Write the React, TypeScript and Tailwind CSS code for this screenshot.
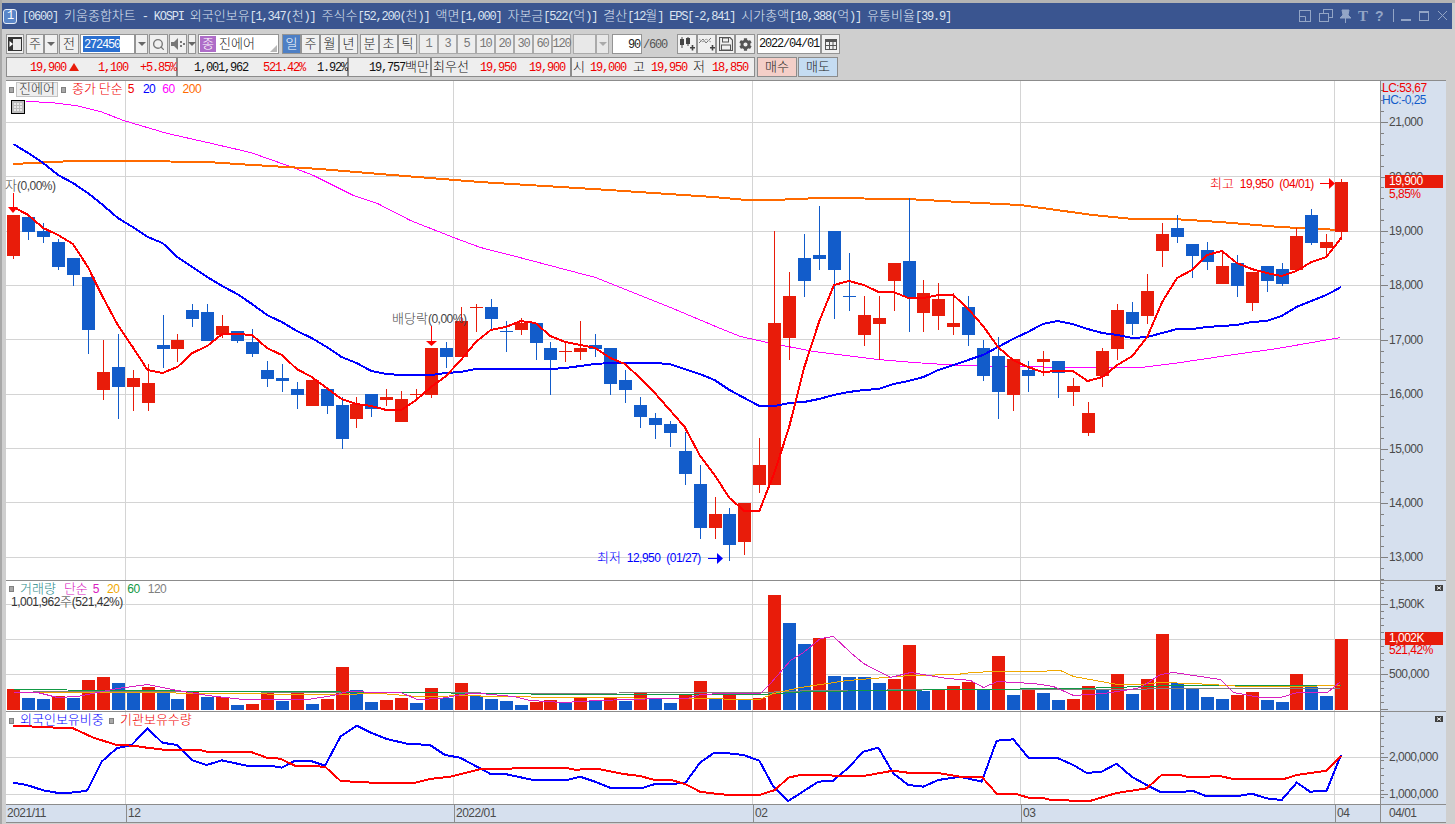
import type { ReactNode } from 'react';
import { Search } from 'lucide-react';
import { FaCog } from 'react-icons/fa';

const RED = '#e81c0a';
const BLUE = '#125cca';

// toolbar text: the original font is half width latin + full width hangul
function T({ text }: { text: string }) {
  return (
    <>
      {text.split(/([가-힣]+)/).map((part, i) =>
        /[가-힣]/.test(part) ? (
          <span key={i} className="text-[13px] tracking-normal font-light">{part}</span>
        ) : (
          <span key={i} className="text-[12px] tracking-[-1.2px]">{part}</span>
        ),
      )}
    </>
  );
}

// chart text: same hangul, but latin is proportional with 6px digits
function C({ text }: { text: string }) {
  return (
    <>
      {text.split(/([가-힣]+)/).map((part, i) =>
        /[가-힣]/.test(part) ? (
          <span key={i} className="text-[13px] tracking-normal font-light">{part}</span>
        ) : (
          <span key={i} className="text-[12px] tracking-[-0.5px] font-['Liberation_Sans',sans-serif]">{part}</span>
        ),
      )}
    </>
  );
}

function Btn({ className = '', children }: { className?: string; children?: ReactNode }) {
  return (
    <div className={`h-[20px] shrink-0 flex items-center justify-center border border-[#949494] bg-[#f0f0f0] text-[#222] ${className}`}>
      {children}
    </div>
  );
}

function Arrow({ className = '' }: { className?: string }) {
  return (
    <Btn className={className}>
      <div className="w-0 h-0 border-x-[4px] border-x-transparent border-t-[4px] border-t-[#666]" />
    </Btn>
  );
}

// candles: wick top, body top, body bottom, wick bottom, colour
type Candle = [number, number, number, number, 'r' | 'b'];
const candles: Candle[] = [
  [215, 215, 256, 259, 'r'], [217, 217, 232, 240, 'b'], [223, 231, 237, 243, 'b'], [239, 242, 267, 270, 'b'],
  [258, 258, 275, 286, 'b'], [277, 277, 330, 354, 'b'], [340, 372, 390, 400, 'r'], [334, 367, 387, 419, 'b'],
  [370, 378, 387, 411, 'r'], [364, 383, 403, 411, 'r'], [315, 345, 349, 368, 'b'], [334, 340, 349, 362, 'r'],
  [304, 310, 319, 327, 'b'], [304, 312, 341, 341, 'b'], [315, 326, 335, 338, 'r'], [331, 331, 341, 343, 'b'],
  [329, 342, 354, 357, 'b'], [361, 370, 379, 387, 'b'], [364, 378, 381, 392, 'b'], [382, 389, 395, 409, 'b'],
  [380, 380, 406, 406, 'r'], [389, 389, 406, 414, 'b'], [397, 405, 439, 449, 'b'], [397, 404, 419, 428, 'r'],
  [394, 394, 409, 417, 'b'], [389, 397, 400, 406, 'r'], [391, 399, 422, 422, 'r'], [389, 394, 395, 401, 'r'],
  [348, 348, 395, 398, 'r'], [342, 348, 357, 368, 'b'], [307, 321, 357, 357, 'r'], [304, 307, 308, 332, 'r'],
  [299, 307, 319, 330, 'b'], [321, 331, 332, 352, 'b'], [318, 323, 330, 335, 'r'], [323, 323, 343, 360, 'b'],
  [342, 348, 360, 395, 'b'], [342, 351, 352, 362, 'r'], [321, 348, 352, 360, 'r'], [334, 345, 349, 357, 'b'],
  [348, 348, 384, 395, 'b'], [370, 380, 390, 403, 'b'], [397, 405, 417, 428, 'b'], [413, 418, 425, 439, 'b'],
  [421, 424, 433, 447, 'b'], [432, 451, 474, 485, 'b'], [465, 484, 528, 539, 'b'], [497, 514, 528, 539, 'r'],
  [508, 514, 545, 561, 'b'], [503, 503, 542, 555, 'r'], [438, 465, 485, 493, 'r'], [231, 323, 485, 485, 'r'],
  [272, 296, 338, 360, 'r'], [234, 258, 281, 297, 'b'], [206, 255, 259, 270, 'b'], [231, 231, 270, 319, 'b'],
  [253, 296, 297, 311, 'b'], [296, 315, 335, 346, 'r'], [296, 318, 324, 360, 'r'], [263, 263, 281, 311, 'r'],
  [198, 261, 297, 332, 'b'], [280, 293, 313, 332, 'r'], [283, 299, 316, 330, 'r'], [293, 323, 327, 335, 'r'],
  [296, 307, 335, 346, 'b'], [340, 348, 376, 381, 'b'], [337, 356, 392, 419, 'b'], [359, 359, 395, 411, 'r'],
  [361, 370, 376, 392, 'b'], [351, 359, 362, 376, 'r'], [361, 361, 373, 398, 'b'], [378, 386, 392, 406, 'r'],
  [402, 413, 433, 436, 'r'], [348, 351, 376, 387, 'r'], [304, 310, 349, 360, 'r'], [302, 312, 324, 335, 'b'],
  [274, 291, 316, 324, 'r'], [223, 234, 251, 267, 'r'], [215, 228, 237, 243, 'b'], [244, 244, 256, 278, 'b'],
  [242, 250, 262, 270, 'b'], [253, 266, 284, 284, 'r'], [255, 263, 286, 297, 'b'], [272, 272, 303, 311, 'r'],
  [266, 266, 281, 292, 'b'], [263, 269, 284, 286, 'b'], [228, 236, 270, 270, 'r'], [209, 215, 243, 245, 'b'],
  [234, 242, 248, 255, 'r'], [179, 182, 232, 240, 'r'],
];

const cx = (i: number) => 13.3 + 14.92 * i;

const ma5 = [
  207, 215, 228, 235, 244, 267, 297, 325, 347, 370, 373, 367, 353, 346, 334, 334, 335, 348, 355, 369, 377, 388, 399, 404, 406,
  410, 410, 400, 387, 376, 360, 342, 330, 327, 321, 323, 336, 342, 345, 348, 358, 364, 378, 393, 410, 427, 455, 475, 498, 511,
  511, 473, 427, 368, 322, 285, 281, 285, 292, 292, 298, 298, 295, 295, 309, 326, 347, 360, 367, 372, 371, 371, 381, 377, 365,
  356, 337, 302, 278, 270, 255, 251, 263, 269, 273, 276, 271, 262, 257, 238,
];
const ma20 = [
  144, 153, 163, 175, 183, 193, 205, 218, 227, 237, 243, 257, 267, 277, 286, 294, 304, 315, 322, 331, 338, 347, 357, 363, 371,
  374, 375, 375, 375, 373, 372, 369, 369, 369, 369, 369, 369, 368, 366, 364, 363, 363, 363, 363, 364, 369, 374, 380, 390, 398,
  406, 406, 403, 402, 399, 395, 392, 390, 389, 384, 381, 377, 370, 365, 360, 355, 347, 339, 332, 324, 321, 324, 329, 333, 335,
  338, 337, 333, 329, 329, 327, 326, 325, 322, 321, 316, 307, 301, 295, 287,
];
const ma60: number[] = [
  26, 101, 50, 102, 75, 105, 100, 111, 123, 120, 167, 133, 207, 142, 250, 152, 287, 165, 313, 175, 353, 195, 377, 203, 410, 220,
  453, 237, 480, 247, 523, 258, 557, 267, 595, 277, 620, 287, 670, 307, 720, 328, 740, 336, 767, 342, 813, 351, 877, 359, 913, 362,
  960, 365, 1070, 367, 1140, 367, 1173, 363, 1227, 355, 1277, 348, 1340, 337,
];
const ma200: number[] = [
  13, 164, 73, 161, 133, 161, 207, 162, 253, 165, 320, 169, 380, 174, 480, 182, 609, 190, 713, 197, 747, 200, 773, 200, 820, 198,
  907, 199, 960, 202, 1020, 205, 1093, 215, 1133, 219, 1173, 219, 1220, 222, 1280, 227, 1340, 230,
];

// volume bars: top of each bar (baseline 710)
const vol: [number, 'r' | 'b'][] = [
  [689, 'r'], [698, 'b'], [699, 'b'], [696, 'r'], [698, 'b'], [680, 'r'], [677, 'r'], [683, 'b'], [692, 'b'], [687, 'r'],
  [692, 'b'], [699, 'b'], [692, 'r'], [697, 'b'], [697, 'r'], [705, 'b'], [704, 'r'], [692, 'r'], [701, 'b'], [691, 'r'],
  [704, 'b'], [699, 'r'], [667, 'r'], [690, 'b'], [702, 'b'], [700, 'r'], [698, 'r'], [703, 'b'], [688, 'r'], [698, 'b'],
  [683, 'r'], [696, 'b'], [699, 'b'], [701, 'b'], [705, 'b'], [702, 'r'], [700, 'r'], [703, 'b'], [697, 'r'], [701, 'b'],
  [697, 'r'], [701, 'b'], [692, 'r'], [698, 'b'], [703, 'b'], [695, 'r'], [681, 'r'], [698, 'b'], [695, 'r'], [699, 'b'],
  [698, 'r'], [595, 'r'], [623, 'b'], [644, 'b'], [638, 'r'], [676, 'b'], [677, 'b'], [677, 'b'], [683, 'b'], [679, 'r'],
  [645, 'r'], [691, 'b'], [690, 'r'], [686, 'r'], [682, 'r'], [689, 'b'], [656, 'r'], [695, 'b'], [689, 'r'], [693, 'b'],
  [700, 'b'], [699, 'r'], [686, 'r'], [690, 'b'], [674, 'r'], [694, 'b'], [679, 'r'], [634, 'r'], [683, 'b'], [689, 'b'],
  [697, 'b'], [699, 'b'], [695, 'r'], [692, 'r'], [700, 'b'], [702, 'b'], [674, 'r'], [687, 'b'], [696, 'b'], [639, 'r'],
];

// lines read off the reference, x and y in 3x crop units with a crop origin
const crop = (ox: number, oy: number, pts: number[]) => {
  const out: number[] = [];
  for (let i = 0; i < pts.length; i += 2) out.push(ox + pts[i] / 3, oy + pts[i + 1] / 3);
  return out;
};
const low = (a: number[], b: number[], c: number[]) => [...crop(0, 575, a), ...crop(480, 575, b), ...crop(960, 575, c)];

const volMa5 = low(
  [40, 350, 110, 350, 170, 365, 230, 362, 290, 350, 350, 338, 440, 328, 530, 345, 620, 360, 730, 372, 820, 373, 920, 372, 1000, 360, 1040, 347, 1140, 350, 1200, 350, 1250, 373, 1320, 368, 1400, 353],
  [0, 353, 100, 362, 150, 375, 250, 382, 350, 375, 450, 372, 540, 368, 620, 368, 660, 358, 730, 355, 840, 355, 870, 325, 930, 255, 970, 230, 1020, 190, 1060, 182, 1110, 230, 1150, 263, 1230, 305, 1290, 292, 1400, 310],
  [0, 312, 30, 315, 70, 337, 110, 317, 160, 322, 220, 325, 280, 332, 340, 360, 430, 353, 510, 343, 540, 335, 600, 297, 640, 292, 700, 300, 780, 312, 820, 350, 900, 365, 960, 367, 1010, 352, 1100, 352, 1140, 317],
);
const volMa20 = low(
  [40, 350, 300, 352, 500, 350, 550, 355, 750, 355, 850, 357, 1000, 358, 1140, 353, 1250, 362, 1440, 360],
  [0, 362, 300, 365, 620, 370, 838, 372, 880, 355, 960, 335, 1100, 316, 1290, 300, 1440, 296],
  [0, 293, 90, 288, 220, 288, 300, 286, 340, 303, 470, 327, 540, 327, 600, 322, 700, 323, 850, 332, 1000, 332, 1140, 330],
);
const volMa60 = low(
  [40, 341, 100, 343, 300, 345, 1260, 351, 1440, 354],
  [0, 355, 300, 357, 840, 356, 990, 348, 1440, 341],
  [0, 341, 360, 340, 640, 330, 1140, 330],
);
const volMa120 = low([100, 348, 1440, 352], [0, 353, 840, 352, 1000, 346, 1440, 342], [0, 342, 1140, 340]);

const foreign = low(
  [40, 623, 80, 630, 130, 646, 175, 654, 230, 652, 262, 646, 305, 560, 350, 520, 395, 510, 442, 460, 487, 503, 530, 510, 577, 556, 620, 570, 665, 556, 740, 572, 810, 572, 845, 578, 885, 557, 930, 557, 975, 572, 1022, 484, 1070, 452, 1110, 472, 1160, 492, 1220, 506, 1290, 510, 1335, 540, 1380, 548, 1440, 580],
  [30, 596, 80, 598, 155, 614, 265, 614, 300, 605, 345, 620, 390, 638, 490, 638, 525, 627, 615, 625, 660, 563, 700, 535, 745, 535, 790, 540, 838, 557, 880, 635, 925, 678, 1015, 620, 1060, 617, 1105, 578, 1150, 530, 1195, 518, 1240, 595, 1285, 630, 1330, 635, 1375, 615, 1440, 605],
  [65, 620, 110, 497, 160, 493, 205, 548, 290, 548, 340, 570, 380, 594, 425, 590, 470, 566, 515, 605, 560, 630, 600, 650, 670, 650, 700, 648, 735, 662, 840, 662, 875, 656, 920, 670, 965, 675, 1010, 623, 1050, 650, 1100, 647, 1143, 540],
);
const institution = low(
  [40, 452, 170, 458, 215, 458, 280, 488, 350, 510, 400, 512, 440, 518, 490, 524, 600, 525, 620, 530, 750, 530, 800, 548, 840, 551, 885, 572, 975, 575, 1022, 618, 1115, 623, 1245, 623, 1290, 612, 1350, 605, 1440, 583],
  [80, 582, 125, 578, 255, 578, 285, 584, 355, 582, 430, 597, 480, 603, 520, 614, 570, 614, 615, 627, 660, 650, 705, 656, 750, 660, 838, 660, 885, 645, 925, 608, 960, 600, 1150, 603, 1240, 587, 1290, 594, 1375, 594, 1440, 605],
  [65, 605, 110, 656, 165, 656, 205, 668, 245, 668, 270, 674, 360, 678, 390, 678, 470, 654, 560, 640, 605, 600, 660, 600, 680, 605, 740, 605, 780, 603, 815, 611, 975, 611, 1010, 600, 1100, 587, 1143, 543],
);

const vGrid = [125.5, 453.5, 752.5, 1020.5, 1334.5];
const priceY = (p: number) => 231 + (19000 - p) * 0.05438;
const prices = [21000, 20000, 19000, 18000, 17000, 16000, 15000, 14000, 13000];

function Line({ pts, color, w = 2 }: { pts: number[]; color: string; w?: number }) {
  // 1px lines sit on pixel centres, else the rasteriser can drop flat runs
  const points = pts.map((v) => (w === 1 ? Math.round(v) + 0.5 : v)).join(' ');
  return <polyline points={points} fill="none" stroke={color} strokeWidth={w} shapeRendering="crispEdges" />;
}

function Grid({ top, h, ys }: { top: number; h: number; ys: number[] }) {
  return (
    <g stroke="#d4d4d4" strokeWidth={1} shapeRendering="crispEdges">
      {ys.map((y) => <line key={y} x1={6} x2={1380} y1={y + 0.5} y2={y + 0.5} />)}
      {vGrid.map((x) => <line key={x} x1={x} x2={x} y1={top} y2={top + h} />)}
    </g>
  );
}

function Ticks({ top, h, major, minor }: { top: number; h: number; major: number[]; minor: number[] }) {
  return (
    <svg className="absolute inset-0" width={65} height={h} viewBox={`0 ${top} 65 ${h}`}>
      <g stroke="#808080" strokeWidth={1} shapeRendering="crispEdges">
        {minor.map((y) => <line key={y} x1={0} x2={3} y1={Math.round(y) + 0.5} y2={Math.round(y) + 0.5} />)}
        {major.map((y) => <line key={y} x1={0} x2={7} y1={Math.round(y) + 0.5} y2={Math.round(y) + 0.5} />)}
      </g>
    </svg>
  );
}

function Dot({ className = '' }: { className?: string }) {
  return <div className={`w-[5px] h-[6px] bg-[#a8a8a8] border border-[#808080] ${className}`} />;
}

function MiniClose({ className = '' }: { className?: string }) {
  return (
    <svg className={`absolute ${className}`} width={8} height={6} viewBox="0 0 8 6">
      <rect width={8} height={6} fill="#404040" />
      <path d="M2 1.5 L6 4.5 M6 1.5 L2 4.5" stroke="#fff" strokeWidth={1} />
    </svg>
  );
}

function AxisLabel({ y, text }: { y: number; text: string }) {
  return (
    <div className="absolute left-[8px] leading-4 text-[#4a4a4a] whitespace-nowrap" style={{ top: y - 8 }}>
      <C text={text} />
    </div>
  );
}

function PricePane() {
  return (
    <div className="flex h-[500px] border-t border-[#8c8c8c]">
      <div className="relative w-[1374px] h-[499px] bg-white">
        <svg className="block" width={1374} height={499} viewBox="6 81 1374 499">
          <Grid top={81} h={499} ys={[122, 176, 231, 285, 339, 394, 448, 502, 557]} />
          <Line pts={ma60} color="#ff00ff" w={1} />
          <Line pts={ma200} color="#ff6a00" />
          {candles.map(([wt, bt, bb, wb, c], i) => {
            const fill = c === 'r' ? RED : BLUE;
            const x = Math.round(cx(i));
            return (
              <g key={i} fill={fill} shapeRendering="crispEdges">
                <rect x={x} y={wt} width={1} height={wb - wt} />
                <rect x={x - 6} y={bt} width={13} height={bb - bt} />
              </g>
            );
          })}
          <Line pts={ma20.flatMap((y, i) => [cx(i), y])} color="#0000ff" />
          <Line pts={ma5.flatMap((y, i) => [cx(i), y])} color="#ff0000" />
          <g fill="#ff0000" stroke="none">
            <rect x={13} y={193} width={1} height={14} />
            <polygon points="8,207 18,207 13,213" />
            <rect x={431} y={326} width={1} height={15} />
            <polygon points="426,341 437,341 431.5,346" />
            <rect x={1320} y={183} width={10} height={1} />
            <polygon points="1329,178 1329,189 1335,183.5" />
          </g>
          <g fill="#0000ff">
            <rect x={708} y={558} width={10} height={1} />
            <polygon points="717,553 717,564 723,558.5" />
          </g>
        </svg>

        {/* legend */}
        <Dot className="absolute left-[3px] top-[6px]" />
        <div className="absolute left-[10px] top-[1px] w-[42px] h-[15px] flex items-center justify-center bg-[#eeeeee] border border-[#c4c4c4] text-[#333]">
          <C text="진에어" />
        </div>
        <Dot className="absolute left-[55px] top-[6px]" />
        <div className="absolute left-[66px] top-[0px] leading-4 flex whitespace-nowrap">
          <span className="text-[#f00000]"><C text="종가 단순" /></span>
          <span className="ml-[5px] text-[#f00000]"><C text="5" /></span>
          <span className="ml-[9px] text-[#0000ff]"><C text="20" /></span>
          <span className="ml-[7px] text-[#ff00ff]"><C text="60" /></span>
          <span className="ml-[8px] text-[#ff6a00]"><C text="200" /></span>
        </div>
        <div className="absolute left-[5px] top-[19px] w-[14px] h-[14px] border border-black bg-[#bdbdbd] grid grid-cols-3 gap-px p-[2px]">
          {Array.from({ length: 9 }, (_, i) => <div key={i} className="bg-[#e8e8e8]" />)}
        </div>

        {/* chart notes */}
        <div className="absolute left-[-1px] top-[97px] leading-4 text-[#444] whitespace-nowrap"><C text="자(0,00%)" /></div>
        <div className="absolute left-[386px] top-[230px] leading-4 text-[#444] whitespace-nowrap"><C text="배당락(0,00%)" /></div>
        <div className="absolute left-[1204px] top-[95px] leading-4 text-[#f00000] whitespace-nowrap [word-spacing:3px]"><C text="최고 19,950 (04/01)" /></div>
        <div className="absolute left-[591px] top-[469px] leading-4 text-[#0000ff] whitespace-nowrap [word-spacing:3px]"><C text="최저 12,950 (01/27)" /></div>
      </div>

      <div className="relative w-[66px] bg-[#d6e0ee] border-l border-[#8c8c8c]">
        <Ticks
          top={81}
          h={499}
          major={prices.map(priceY)}
          minor={Array.from({ length: 50 }, (_, i) => priceY(12400 + i * 200))}
        />
        <div className="absolute left-[1px] top-[1px] leading-[13px] text-[#f00000] whitespace-nowrap"><C text="LC:53,67" /></div>
        <div className="absolute left-[1px] top-[13px] leading-[13px] text-[#125cca] whitespace-nowrap"><C text="HC:-0,25" /></div>
        {prices.map((p) => (
          <AxisLabel key={p} y={priceY(p) - 81} text={p.toLocaleString('en-US')} />
        ))}
        <div className="absolute left-[4px] top-[94px] w-[58px] h-[13px] bg-[#e81c0a] text-white leading-[13px] pl-[4px]"><C text="19,900" /></div>
        <div className="absolute left-[8px] top-[105px] leading-4 text-[#f00000]"><C text="5,85%" /></div>
      </div>
    </div>
  );
}

function VolumePane() {
  return (
    <div className="flex h-[131px] border-t border-[#8c8c8c]">
      <div className="relative w-[1374px] h-[130px] bg-white">
        <svg className="block" width={1374} height={130} viewBox="6 581 1374 130">
          <Grid top={581} h={130} ys={[604, 639, 674]} />
          {vol.map(([top, c], i) => (
            <rect key={i} x={Math.round(cx(i)) - 6} y={top} width={13} height={710 - top} fill={c === 'r' ? RED : BLUE} shapeRendering="crispEdges" />
          ))}
          <Line pts={volMa120} color="#808080" w={1} />
          <Line pts={volMa60} color="#119944" w={1} />
          <Line pts={volMa20} color="#f0a800" w={1} />
          <Line pts={volMa5} color="#d820c0" w={1} />
        </svg>
        <Dot className="absolute left-[3px] top-[5px]" />
        <div className="absolute left-[14px] top-[0px] leading-4 flex whitespace-nowrap">
          <span className="text-[#2a8a8a]"><C text="거래량" /></span>
          <span className="ml-[8px] text-[#d820c0]"><C text="단순" /></span>
          <span className="ml-[5px] text-[#d820c0]"><C text="5" /></span>
          <span className="ml-[8px] text-[#f0a800]"><C text="20" /></span>
          <span className="ml-[8px] text-[#119944]"><C text="60" /></span>
          <span className="ml-[8px] text-[#808080]"><C text="120" /></span>
        </div>
        <div className="absolute left-[5px] top-[13px] leading-4 text-[#333] whitespace-nowrap"><C text="1,001,962주(521,42%)" /></div>
      </div>
      <div className="relative w-[66px] bg-[#d6e0ee] border-l border-[#8c8c8c]">
        <Ticks top={581} h={130} major={[604, 639, 674, 709]} minor={Array.from({ length: 19 }, (_, i) => 583 + i * 7)} />
        <MiniClose className="left-[54px] top-[4px]" />
        <AxisLabel y={23} text="1,500K" />
        <AxisLabel y={93} text="500,000" />
        <div className="absolute left-[4px] top-[51px] w-[58px] h-[13px] bg-[#e81c0a] text-white leading-[13px] pl-[4px]"><C text="1,002K" /></div>
        <div className="absolute left-[8px] top-[61px] leading-4 text-[#f00000]"><C text="521,42%" /></div>
      </div>
    </div>
  );
}

function HoldingPane() {
  return (
    <div className="flex h-[93px] border-t border-[#8c8c8c]">
      <div className="relative w-[1374px] h-[92px] bg-white">
        <svg className="block" width={1374} height={92} viewBox="6 712 1374 92">
          <Grid top={712} h={92} ys={[757, 794]} />
          <Line pts={foreign} color="#0000ff" />
          <Line pts={institution} color="#ff0000" />
        </svg>
        <Dot className="absolute left-[3px] top-[6px]" />
        <div className="absolute left-[14px] top-[0px] leading-4 text-[#0000ff] whitespace-nowrap"><C text="외국인보유비중" /></div>
        <Dot className="absolute left-[103px] top-[6px]" />
        <div className="absolute left-[114px] top-[0px] leading-4 text-[#f00000] whitespace-nowrap"><C text="기관보유수량" /></div>
      </div>
      <div className="relative w-[66px] bg-[#d6e0ee] border-l border-[#8c8c8c]">
        <Ticks top={712} h={92} major={[757, 794]} minor={Array.from({ length: 12 }, (_, i) => 716 + i * 7.4)} />
        <MiniClose className="left-[54px] top-[4px]" />
        <AxisLabel y={45} text="2,000,000" />
        <AxisLabel y={82} text="1,000,000" />
      </div>
    </div>
  );
}

function DateAxis() {
  const cells = [
    { w: 'w-[120px]', t: '2021/11' },
    { w: 'w-[328px]', t: '12' },
    { w: 'w-[299px]', t: '2022/01' },
    { w: 'w-[268px]', t: '02' },
    { w: 'w-[314px]', t: '03' },
    { w: 'w-[45px]', t: '04' },
    { w: 'w-[66px]', t: '04/01' },
  ];
  return (
    <div className="flex h-[19px] bg-[#d6e0ee] border-y border-[#8c8c8c] text-[#4a4a4a]">
      {cells.map(({ w, t }, i) => (
        <div key={t} className={`${w} leading-[17px] ${i === 6 ? 'pl-[8px]' : 'pl-[1px]'} ${i > 0 ? 'border-l border-[#8c8c8c]' : ''}`}>
          <C text={t} />
        </div>
      ))}
    </div>
  );
}

function TitleBar() {
  return (
    <div className="h-[26px] flex items-center bg-[#3a5590] text-[#dce4f0] relative">
      <div className="ml-[1px] w-[14px] h-[15px] rounded-[3px] border border-[#e8eef8] bg-[#5a86c8] flex items-center justify-center text-white leading-none">
        <T text="1" />
      </div>
      <div className="ml-[5px] whitespace-nowrap leading-none">
        <T text="[0600] 키움종합차트 - KOSPI 외국인보유[1,347(천)] 주식수[52,200(천)] 액면[1,000] 자본금[522(억)] 결산[12월] EPS[-2,841] 시가총액[10,388(억)] 유통비율[39.9]" />
      </div>
      <div className="absolute left-[1297px] top-[6px] flex items-center text-[#93a5c6]">
        <svg width={150} height={18} viewBox="0 0 150 18" fill="none" stroke="currentColor">
          <rect x={0.5} y={1.5} width={11} height={11} />
          <path d="M1 7.5 H6.5 V12" />
          <rect x={24.5} y={0.5} width={9} height={8} />
          <rect x={20.5} y={4.5} width={9} height={8} fill="#3a5590" />
          <path d="M43 1 H50 L49 6 L52 9 H41 L44 6 Z M46.5 9 V14" fill="currentColor" strokeWidth={1} />
          <line x1={94.5} y1={0} x2={94.5} y2={13} />
          <rect x={102} y={10} width={10} height={2} fill="currentColor" stroke="none" />
          <rect x={120.5} y={2.5} width={9} height={9} />
          <rect x={120} y={2} width={10} height={2} fill="currentColor" stroke="none" />
          <path d="M139 2 L148 11 M148 2 L139 11" />
        </svg>
        <span className="absolute left-[59px] -top-[1px] font-['Liberation_Serif',serif] font-bold text-[15px] leading-4">T</span>
        <span className="absolute left-[76px] -top-[1px] font-['Liberation_Sans',sans-serif] font-bold text-[14px] leading-4">?</span>
      </div>
    </div>
  );
}

function Toolbar() {
  return (
    <div className="h-[20px] flex items-center">
      <Btn className="w-[18px]">
        <svg width={14} height={14} viewBox="0 0 14 14">
          <rect x={0.5} y={0.5} width={13} height={13} fill="#e8e8e8" stroke="#333" />
          <rect x={0} y={0} width={5} height={14} fill="#333" />
          <path d="M5 7 L1.5 4 V10 Z" fill="#fff" />
          <rect x={0} y={0} width={14} height={2} fill="#333" />
        </svg>
      </Btn>
      <Btn className="ml-[2px] w-[18px]"><T text="주" /></Btn>
      <Arrow className="w-[14px]" />
      <Btn className="ml-[1px] w-[20px]"><T text="전" /></Btn>
      <div className="ml-[1px] w-[55px] h-[20px] bg-white border border-[#949494] flex items-center pl-[2px]">
        <span className="bg-[#2a6fd0] text-white leading-4 w-[37px] h-[16px] pl-[1px]"><T text="272450" /></span>
      </div>
      <Arrow className="w-[13px]" />
      <Btn className="ml-[1px] w-[19px]"><Search size={13} strokeWidth={2.5} color="#777" /></Btn>
      <Btn className="ml-[1px] w-[18px]">
        <svg width={14} height={12} viewBox="0 0 14 12" fill="#777">
          <path d="M0 4 H3 L7 0 V12 L3 8 H0 Z" />
          <rect x={9} y={3} width={2} height={2} />
          <rect x={9} y={7} width={2} height={2} />
          <rect x={12} y={5} width={2} height={2} />
        </svg>
      </Btn>
      <Arrow className="ml-[1px] w-[8px]" />
      <div className="ml-[2px] w-[81px] h-[20px] bg-white border border-[#949494] flex items-center pl-[1px] relative">
        <div className="w-[16px] h-[16px] bg-[#ae6cc8] text-white flex items-center justify-center"><T text="종" /></div>
        <span className="ml-[3px] text-[#222]"><T text="진에어" /></span>
        <div className="absolute right-[1px] bottom-[1px] w-0 h-0 border-l-[7px] border-l-transparent border-b-[7px] border-b-[#b8b8b8]" />
      </div>
      <Btn className="ml-[3px] w-[19px] !bg-[#4d7fc5] !text-white"><T text="일" /></Btn>
      <Btn className="w-[19px]"><T text="주" /></Btn>
      <Btn className="w-[19px]"><T text="월" /></Btn>
      <Btn className="w-[19px]"><T text="년" /></Btn>
      <Btn className="ml-[2px] w-[19px]"><T text="분" /></Btn>
      <Btn className="w-[19px]"><T text="초" /></Btn>
      <Btn className="w-[19px]"><T text="틱" /></Btn>
      <div className="ml-[2px] flex text-[#777]">
        {['1', '3', '5', '10', '20', '30', '60', '120'].map((n) => (
          <div key={n} className="w-[19px] h-[20px] shrink-0 flex items-center justify-center border border-[#aaaaaa] bg-[#eeeeee]">
            <T text={n} />
          </div>
        ))}
      </div>
      <div className="ml-[2px] w-[23px] h-[20px] bg-[#e8e8e8] border border-[#aaaaaa]" />
      <div className="w-[13px] h-[20px] bg-[#e8e8e8] border border-[#aaaaaa] flex items-center justify-center">
        <div className="w-0 h-0 border-x-[4px] border-x-transparent border-t-[4px] border-t-[#aaa]" />
      </div>
      <div className="ml-[3px] w-[30px] h-[20px] bg-white border border-[#949494] text-right pr-[1px] leading-[18px] text-[#222]"><T text="90" /></div>
      <div className="ml-[1px] w-[34px] text-[#555]"><T text="/600" /></div>
      <Btn className="w-[20px]">
        <svg width={16} height={14} viewBox="0 0 16 14" fill="#444">
          <rect x={1} y={2} width={4} height={6} /><rect x={2.5} y={0} width={1} height={11} />
          <rect x={7} y={1} width={4} height={6} /><rect x={8.5} y={0} width={1} height={9} />
          <path d="M11 10 H16 V11.5 H11 Z M12.7 8 H14.3 V13.5 H12.7 Z" />
        </svg>
      </Btn>
      <Btn className="w-[19px]">
        <svg width={16} height={14} viewBox="0 0 16 14" fill="none" stroke="#777">
          <path d="M0 6 L4 2 L7 6 L12 1" /><path d="M0 2 L4 5 L7 2 L12 5" stroke="#aaa" />
          <path d="M11 10 H16 V11.5 H11 Z M12.7 8 H14.3 V13.5 H12.7 Z" fill="#444" stroke="none" />
        </svg>
      </Btn>
      <Btn className="w-[19px]">
        <svg width={14} height={14} viewBox="0 0 14 14" fill="none" stroke="#555">
          <path d="M0.5 0.5 H11 L13.5 3 V13.5 H0.5 Z" strokeWidth={1.2} />
          <rect x={3.5} y={1} width={6} height={4} />
          <rect x={2.5} y={8} width={9} height={5} />
        </svg>
      </Btn>
      <Btn className="w-[20px]"><FaCog size={13} color="#555" /></Btn>
      <div className="ml-[2px] w-[64px] h-[20px] bg-white border border-[#949494] flex items-center justify-center text-[#111]"><T text="2022/04/01" /></div>
      <Btn className="w-[19px]">
        <svg width={12} height={11} viewBox="0 0 12 11" fill="none" stroke="#555">
          <rect x={0.5} y={1.5} width={11} height={9} />
          <rect x={0} y={0} width={12} height={3} fill="#555" stroke="none" />
          <path d="M0 6.5 H12 M4.5 3 V11 M8 3 V11" />
        </svg>
      </Btn>
    </div>
  );
}

function QuoteRow() {
  const cell = 'h-[20px] bg-[#eeeeee] border border-[#8c8c8c] flex items-center whitespace-nowrap text-[#f00000]';
  return (
    <div className="h-[20px] mt-[3px] flex items-center">
      <div className={`${cell} w-[171px]`}>
        <span className="ml-[23px]"><T text="19,900" /></span>
        <div className="ml-[3px] w-0 h-0 border-x-[5px] border-x-transparent border-b-[8px] border-b-[#e81c0a]" />
        <span className="ml-[19px]"><T text="1,100" /></span>
        <span className="ml-[12px]"><T text="+5.85%" /></span>
      </div>
      <div className={`${cell} w-[171px]`}>
        <span className="ml-[16px] text-[#111]"><T text="1,001,962" /></span>
        <span className="ml-[15px]"><T text="521.42%" /></span>
        <span className="ml-[12px] text-[#111]"><T text="1.92%" /></span>
      </div>
      <div className={`${cell} w-[83px] !text-[#111]`}>
        <span className="ml-[20px]"><T text="19,757백만" /></span>
      </div>
      <div className={`${cell} w-[140px]`}>
        <span className="ml-[1px] text-[#111]"><T text="최우선" /></span>
        <span className="ml-[11px]"><T text="19,950" /></span>
        <span className="ml-[13px]"><T text="19,900" /></span>
      </div>
      <div className={`${cell} w-[184px]`}>
        <span className="ml-[1px] text-[#111]"><T text="시" /></span>
        <span className="ml-[5px]"><T text="19,000" /></span>
        <span className="ml-[7px] text-[#111]"><T text="고" /></span>
        <span className="ml-[6px]"><T text="19,950" /></span>
        <span className="ml-[6px] text-[#111]"><T text="저" /></span>
        <span className="ml-[7px]"><T text="18,850" /></span>
      </div>
      <div className="ml-[2px] w-[40px] h-[20px] bg-[#f4cfc8] border border-[#8c8c8c] flex items-center justify-center gap-[1px] text-[#222]"><T text="매수" /></div>
      <div className="ml-[1px] w-[40px] h-[20px] bg-[#c5dcf2] border border-[#8c8c8c] flex items-center justify-center gap-[1px] text-[#222]"><T text="매도" /></div>
    </div>
  );
}

export default function App() {
  return (
    <div className="w-[1455px] h-[824px] overflow-hidden bg-[#cfcfcf] border-l-2 border-[#a8a8a8] font-['Liberation_Mono','Noto_Sans_CJK_KR',monospace] leading-none">
      <div className="h-[3px] bg-[#b4b4b4]" />
      <div className="w-[1450px]">
        <TitleBar />
        <div className="pl-[4px] pt-[5px] h-[51px]">
          <Toolbar />
          <QuoteRow />
        </div>
        <div className="ml-[4px] w-[1440px]">
          <PricePane />
          <VolumePane />
          <HoldingPane />
          <DateAxis />
        </div>
      </div>
    </div>
  );
}
